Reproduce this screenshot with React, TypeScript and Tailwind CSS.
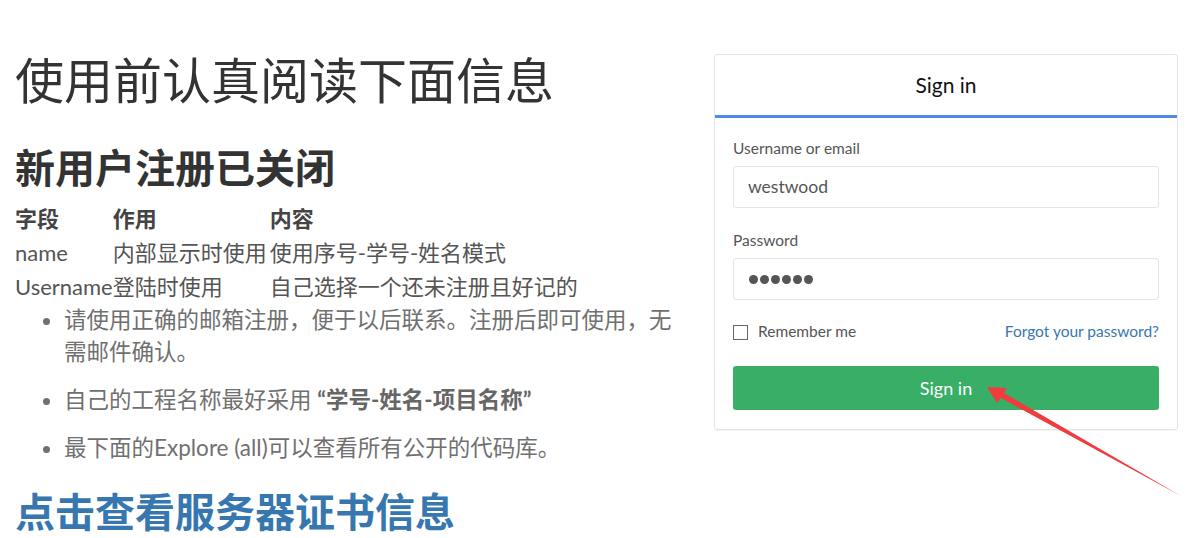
import React from 'react';

const rows = [
  { field: 'name', use: '内部显示时使用', content: '使用序号-学号-姓名模式' },
  { field: 'Username', use: '登陆时使用', content: '自己选择一个还未注册且好记的' },
];

export default function App() {
  return (
    <div className="relative flex w-full h-[538px] bg-white overflow-hidden font-['Lato','Noto_Sans_CJK_SC',sans-serif]">
      <div className="w-[699px] pl-[15px] pr-[22px] pt-[51px] shrink-0">
        <h1 className="text-[49px] leading-[58px] font-normal text-[#333] whitespace-nowrap">使用前认真阅读下面信息</h1>
        <h2 className="mt-[35px] text-[40px] leading-[48px] font-bold text-[#333]">新用户注册已关闭</h2>

        <table className="mt-[10px] border-collapse text-[22px] leading-[34px] text-[#555]">
          <thead>
            <tr className="text-[#444] font-bold">
              <th className="p-0 text-left w-[96px] whitespace-nowrap">字段</th>
              <th className="p-0 text-left w-[157px] whitespace-nowrap">作用</th>
              <th className="p-0 text-left whitespace-nowrap">内容</th>
            </tr>
          </thead>
          <tbody>
            {rows.map((r) => (
              <tr key={r.field}>
                <td className="p-0 whitespace-nowrap">{r.field}</td>
                <td className="p-0 whitespace-nowrap">{r.use}</td>
                <td className="p-0 whitespace-nowrap">{r.content}</td>
              </tr>
            ))}
          </tbody>
        </table>

        <ul className="list-disc pl-[49px] text-[22.5px] leading-[32px] text-[#707070] flex flex-col gap-[16px]">
          <li>请使用正确的邮箱注册，便于以后联系。注册后即可使用，无需邮件确认。</li>
          <li>
            自己的工程名称最好采用 <strong className="font-bold text-[#666]">“学号-姓名-项目名称”</strong>
          </li>
          <li>最下面的Explore (all)可以查看所有公开的代码库。</li>
        </ul>

        <h3 className="mt-[24px] text-[40px] leading-[48px] font-bold text-[#3777b0] whitespace-nowrap">点击查看服务器证书信息</h3>
      </div>

      <div className="mt-[54px] ml-[15px] w-[464px] h-[376px] border border-[#e5e5e5] rounded-[3px] shadow-[0_1px_1px_rgba(0,0,0,0.05)] self-start">
        <div className="h-[63px] flex items-center justify-center border-b-[3px] border-[#4f8ae6]">
          <span className="text-[21px] text-[#111]">Sign in</span>
        </div>
        <div className="px-[18px] pt-[20px]">
          <label className="block text-[15.5px] leading-[20px] text-[#555]">Username or email</label>
          <div className="mt-[8px] h-[42px] border border-[#e5e5e5] rounded-[3px] flex items-center pl-[14px] text-[17.5px] text-[#555]">
            westwood
          </div>

          <label className="block mt-[22px] text-[15.5px] leading-[20px] text-[#555]">Password</label>
          <div className="mt-[8px] h-[42px] border border-[#e5e5e5] rounded-[3px] flex items-center pl-[15px] gap-[2px]">
            {[0, 1, 2, 3, 4, 5].map((i) => (
              <span key={i} className="w-[9px] h-[9px] rounded-full bg-[#555]" />
            ))}
          </div>

          <div className="mt-[22px] h-[20px] flex items-center justify-between">
            <div className="flex items-center gap-[10px]">
              <span className="w-[15px] h-[15px] border border-[#666] bg-white" />
              <span className="text-[15.5px] text-[#555]">Remember me</span>
            </div>
            <a className="text-[15.5px] text-[#3777b0]">Forgot your password?</a>
          </div>

          <button className="mt-[24px] w-full h-[44px] rounded-[3px] bg-[#38ae67] text-white text-[18px]">
            Sign in
          </button>
        </div>
      </div>

      <svg className="absolute left-0 top-0 pointer-events-none" width="1198" height="538" viewBox="0 0 1198 538">
        <polygon
          points="987,387 1007,388 1004,393 1181,496 1001,398 997,403"
          fill="#f03c3c"
        />
      </svg>
    </div>
  );
}
